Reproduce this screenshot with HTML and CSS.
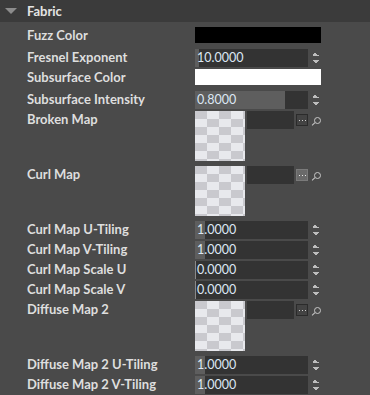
FILE: index.html
```html
<!DOCTYPE html>
<html>
<head>
    <title>Fabric</title>
    <link rel="stylesheet" href="styles.css">
</head>
<body>
<div class="panel">
    <div class="panel-head"><span class="caret"></span>Fabric</div>
    <div class="props">
        <div class="row row-color">
            <label>Fuzz Color</label>
            <div class="swatch swatch-black"></div>
        </div>
        <div class="row row-num">
            <label>Fresnel Exponent</label>
            <div class="num"><div class="field"><span class="fill" style="width:4px"></span><span class="val">10.0000</span></div><span class="spin"></span></div>
        </div>
        <div class="row row-color">
            <label>Subsurface Color</label>
            <div class="swatch swatch-white"></div>
        </div>
        <div class="row row-num">
            <label>Subsurface Intensity</label>
            <div class="num"><div class="field"><span class="fill" style="width:90px"></span><span class="val">0.8000</span></div><span class="spin"></span></div>
        </div>
        <div class="row row-map">
            <label>Broken Map</label>
            <div class="map"><div class="thumb"></div><div class="path"></div><span class="browse"></span><span class="find"></span></div>
        </div>
        <div class="row row-map">
            <label>Curl Map</label>
            <div class="map"><div class="thumb"></div><div class="path"></div><span class="browse hover"></span><span class="find"></span></div>
        </div>
        <div class="row row-num">
            <label>Curl Map U-Tiling</label>
            <div class="num"><div class="field"><span class="fill" style="width:10px"></span><span class="val">1.0000</span></div><span class="spin"></span></div>
        </div>
        <div class="row row-num">
            <label>Curl Map V-Tiling</label>
            <div class="num"><div class="field"><span class="fill" style="width:10px"></span><span class="val">1.0000</span></div><span class="spin"></span></div>
        </div>
        <div class="row row-num">
            <label>Curl Map Scale U</label>
            <div class="num"><div class="field"><span class="fill zero"></span><span class="val">0.0000</span></div><span class="spin"></span></div>
        </div>
        <div class="row row-num">
            <label>Curl Map Scale V</label>
            <div class="num"><div class="field"><span class="fill zero"></span><span class="val">0.0000</span></div><span class="spin"></span></div>
        </div>
        <div class="row row-map">
            <label>Diffuse Map 2</label>
            <div class="map"><div class="thumb"></div><div class="path"></div><span class="browse"></span><span class="find"></span></div>
        </div>
        <div class="row row-num">
            <label>Diffuse Map 2 U-Tiling</label>
            <div class="num"><div class="field"><span class="fill" style="width:10px"></span><span class="val">1.0000</span></div><span class="spin"></span></div>
        </div>
        <div class="row row-num">
            <label>Diffuse Map 2 V-Tiling</label>
            <div class="num"><div class="field"><span class="fill" style="width:10px"></span><span class="val">1.0000</span></div><span class="spin"></span></div>
        </div>
    </div>
</div>
</body>
</html>
```

FILE: styles.css
```css
body {
    margin: 0;
    background: #4a4a4a;
    font-family: Lato, "Open Sans", sans-serif;
    font-size: 13px;
    overflow: hidden;
}
.panel {
    width: 370px;
}
.panel-head {
    height: 22px;
    background: #3b3b3b;
    color: #e4e4e4;
    font-weight: bold;
    line-height: 22px;
    display: flex;
    align-items: center;
}
.caret {
    width: 0;
    height: 0;
    margin: 0 10px 0 5px;
    border-left: 6px solid transparent;
    border-right: 6px solid transparent;
    border-top: 6px solid #8c8c8c;
}
.props {
    padding-top: 4px;
}
.row {
    display: grid;
    grid-template-columns: 168px 126px;
    padding: 1px 0 0 27px;
    box-sizing: border-box;
    align-items: start;
}
.row-color { height: 22px; }
.row-num { height: 20px; }
.row-map { height: 55px; }
label {
    color: #dedede;
    font-weight: bold;
    line-height: 16px;
    white-space: nowrap;
}
.swatch {
    height: 16px;
}
.swatch-black { background: #000; }
.swatch-white { background: #fff; }
.num {
    display: flex;
}
.field {
    position: relative;
    width: 113px;
    height: 18px;
    background: #333;
}
.fill {
    position: absolute;
    left: 0;
    top: 0;
    bottom: 0;
    background: #5e5e5e;
}
.fill.zero {
    width: 1px;
    background: #8a8a8a;
}
.val {
    position: relative;
    display: block;
    padding-left: 2px;
    font-size: 12.5px;
    line-height: 17px;
    color: #dce7f3;
}
.spin {
    width: 13px;
    height: 18px;
    background:
        linear-gradient(#bdbdbd, #bdbdbd) 6px 4px / 2px 1px no-repeat,
        linear-gradient(#bdbdbd, #bdbdbd) 5px 5px / 4px 1px no-repeat,
        linear-gradient(#bdbdbd, #bdbdbd) 5px 6px / 6px 1px no-repeat,
        linear-gradient(#bdbdbd, #bdbdbd) 5px 11px / 6px 1px no-repeat,
        linear-gradient(#bdbdbd, #bdbdbd) 6px 12px / 4px 1px no-repeat,
        linear-gradient(#bdbdbd, #bdbdbd) 7px 13px / 2px 1px no-repeat;
}
.map {
    display: flex;
    align-items: flex-start;
}
.thumb {
    width: 50px;
    height: 50px;
    background: repeating-conic-gradient(#e8e9ed 0 25%, #c9c9ce 0 50%) 0 0 / 24px 16px;
}
.path {
    width: 47px;
    height: 18px;
    margin-left: 2px;
    background: #333;
}
.browse {
    width: 10px;
    height: 10px;
    margin: 3px 0 0 2px;
    border: 1px solid #2b2b2b;
    background:
        linear-gradient(#d0d0d0, #d0d0d0) 2px 5px / 1px 1px no-repeat,
        linear-gradient(#d0d0d0, #d0d0d0) 5px 5px / 1px 1px no-repeat,
        linear-gradient(#d0d0d0, #d0d0d0) 8px 5px / 1px 1px no-repeat,
        #434343;
}
.browse.hover {
    border-color: #7a7a7a;
    background:
        linear-gradient(#e8e8e8, #e8e8e8) 2px 5px / 1px 1px no-repeat,
        linear-gradient(#e8e8e8, #e8e8e8) 5px 5px / 1px 1px no-repeat,
        linear-gradient(#e8e8e8, #e8e8e8) 8px 5px / 1px 1px no-repeat,
        #6a6a6a;
}
.find {
    position: relative;
    width: 9px;
    height: 9px;
    margin: 6px 0 0 4px;
}
.find::before {
    content: "";
    position: absolute;
    right: 0;
    top: 0;
    width: 5px;
    height: 5px;
    border: 1px solid #c8c8c8;
    border-radius: 50%;
}
.find::after {
    content: "";
    position: absolute;
    left: 1px;
    top: 5px;
    width: 1px;
    height: 4px;
    background: #c8c8c8;
    transform: rotate(45deg);
}
```
